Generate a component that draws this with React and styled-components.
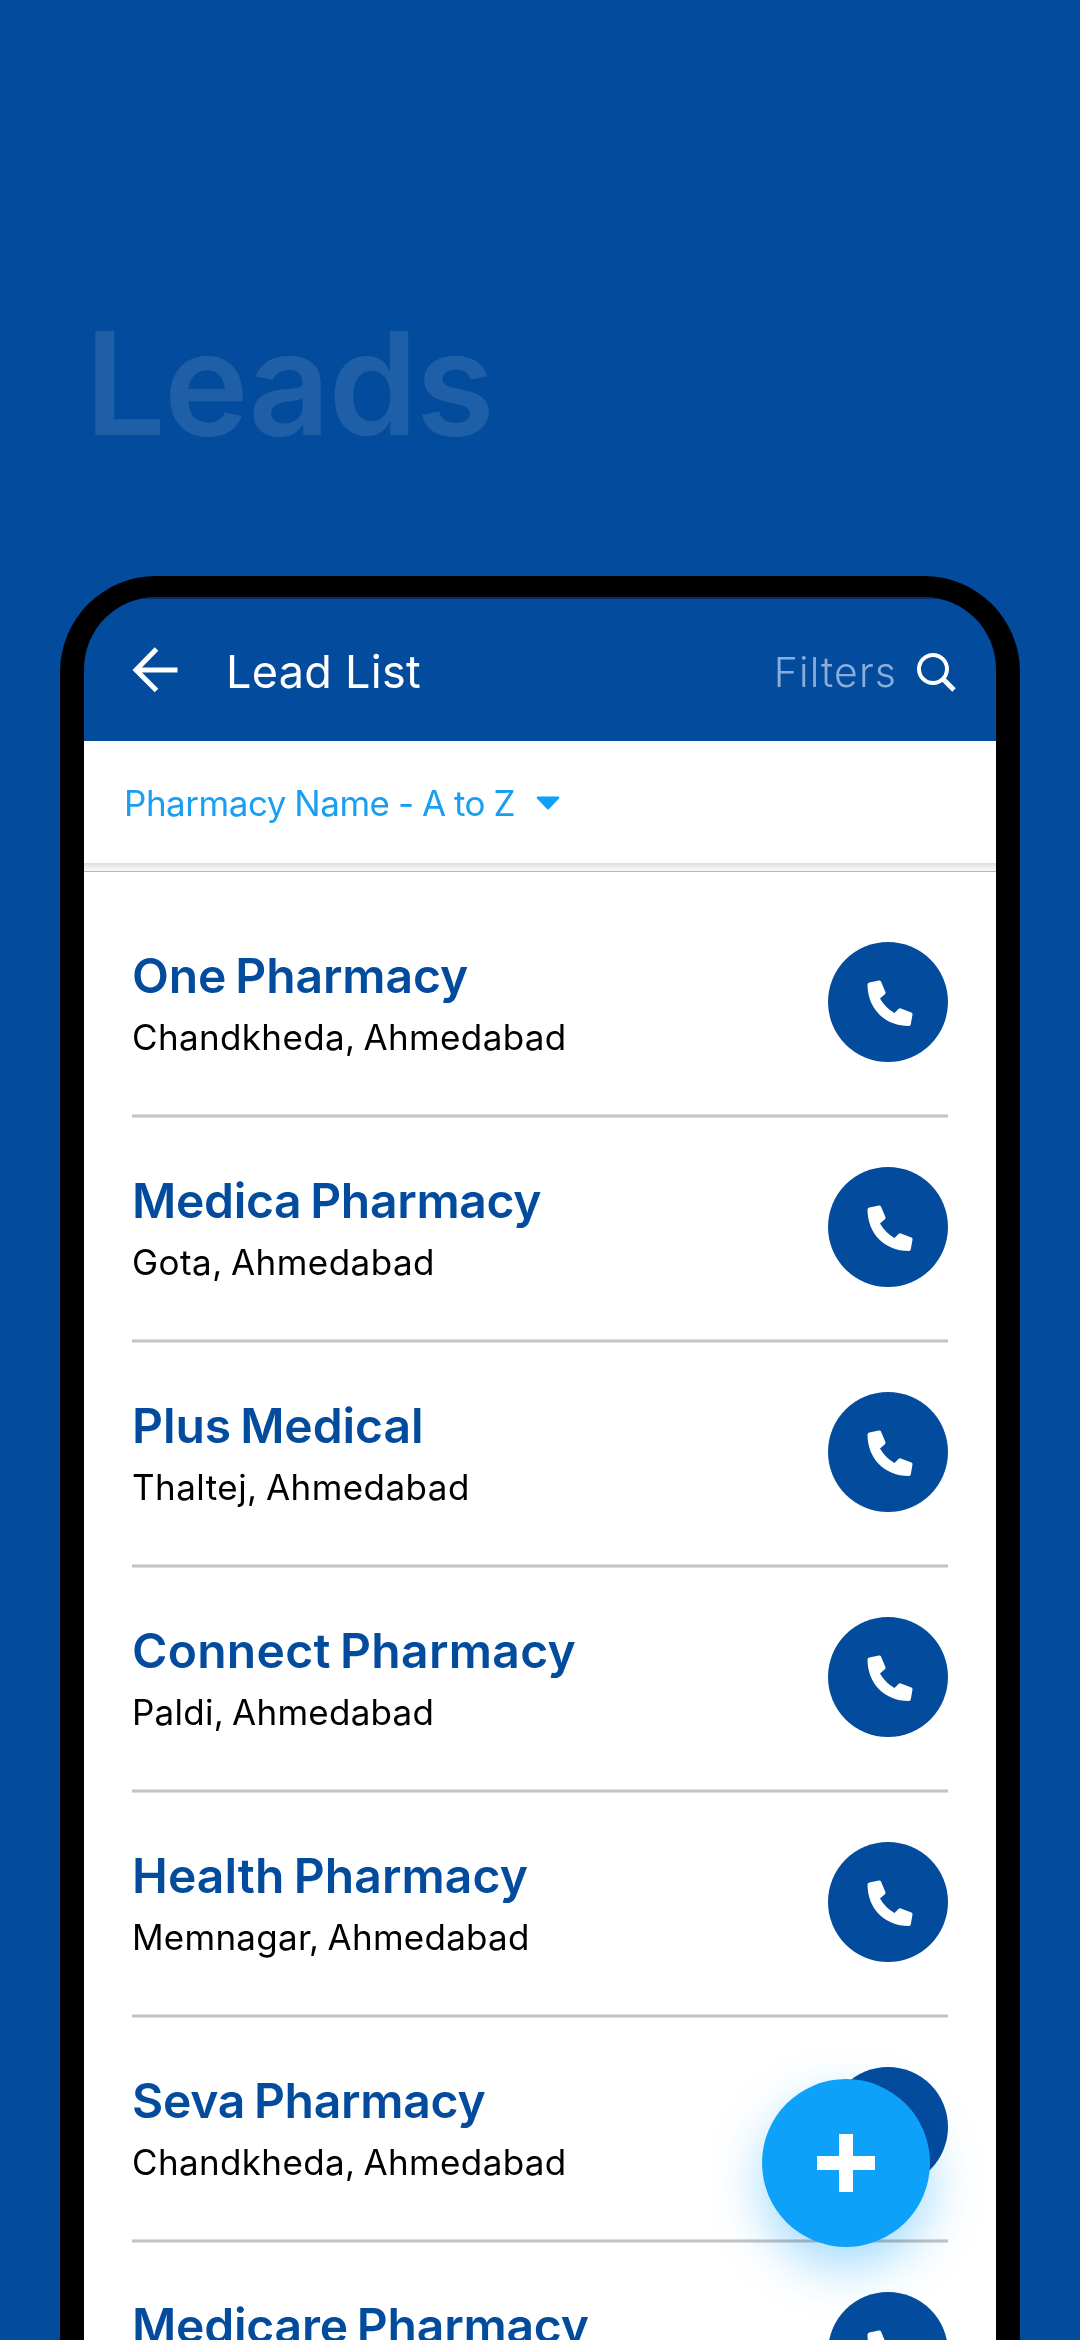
import React from 'react';
import styled, { createGlobalStyle } from 'styled-components';

const colors = {
  brand: '#034c9d',
  accent: '#0ea1f9',
  link: '#189ff2',
  divider: '#c4c4c4',
};

const leads = [
  { name: 'One Pharmacy', area: 'Chandkheda, Ahmedabad', tracking: -0.1, areaTracking: 0.35 },
  { name: 'Medica Pharmacy', area: 'Gota, Ahmedabad', tracking: -0.3, areaTracking: 0.45 },
  { name: 'Plus Medical', area: 'Thaltej, Ahmedabad', tracking: -0.05, areaTracking: 0.45 },
  { name: 'Connect Pharmacy', area: 'Paldi, Ahmedabad', tracking: 0.3, areaTracking: 0.25 },
  { name: 'Health Pharmacy', area: 'Memnagar, Ahmedabad', tracking: 0.1, areaTracking: 0.25 },
  { name: 'Seva Pharmacy', area: 'Chandkheda, Ahmedabad', tracking: -0.25, areaTracking: 0.35 },
  { name: 'Medicare Pharmacy', tracking: -0.2 },
];

const GlobalStyle = createGlobalStyle`
  * {
    box-sizing: border-box;
  }

  body {
    margin: 0;
    background: ${colors.brand};
    font-family: Inter, 'Open Sans', sans-serif;
  }
`;

const Page = styled.main`
  display: flex;
  flex-direction: column;
  width: 1080px;
  height: 2340px;
  overflow: hidden;
  background: ${colors.brand};
`;

const Hero = styled.header`
  flex: none;
  height: 576px;
  padding: 308px 0 0 85px;
`;

const HeroTitle = styled.h1`
  margin: 0;
  font-size: 143px;
  font-weight: 600;
  line-height: 150px;
  letter-spacing: -1.8px;
  color: rgba(255, 255, 255, 0.11);
`;

const Phone = styled.section`
  position: relative;
  display: flex;
  flex: 1;
  min-height: 0;
  margin: 0 60px;
  padding: 21px 24px 0;
  background: #000;
  border-radius: 96px 96px 0 0;
`;

const Screen = styled.div`
  flex: 1;
  overflow: hidden;
  border-radius: 72px 72px 0 0;
`;

const AppBar = styled.div`
  display: flex;
  align-items: center;
  height: 144px;
  padding: 4px 39px 0 48px;
  background: ${colors.brand};
  border-top: 2px solid #062c67;
  color: #fff;
`;

const BackIcon = styled.svg`
  width: 46px;
  height: 46px;
  margin-top: -4px;
`;

const Title = styled.h2`
  flex: 1;
  margin: 0 0 0 48px;
  font-size: 45px;
  font-weight: 400;
  line-height: 60px;
  letter-spacing: 0.3px;
`;

const FiltersLabel = styled.span`
  font-size: 41px;
  font-weight: 350;
  line-height: 60px;
  letter-spacing: 1.1px;
  color: #8aaedb;
`;

const SearchIcon = styled.svg`
  width: 42px;
  height: 42px;
  margin: 0 0 0 18px;
`;

const SortBar = styled.div`
  display: flex;
  align-items: center;
  height: 122px;
  padding: 2px 39px 0 40px;
  background: #fff;
`;

const SortLabel = styled.span`
  font-size: 35px;
  line-height: 48px;
  letter-spacing: -0.47px;
  word-spacing: -1px;
  color: ${colors.link};
`;

const Caret = styled.svg`
  width: 24px;
  height: 14px;
  margin-left: 21px;
`;

const SortShadow = styled.div`
  height: 9px;
  background: linear-gradient(#dedede, #f6f6f6 80%);
  border-bottom: 1px solid #b5b5b5;
`;

const List = styled.ul`
  margin: 0;
  padding: 21px 48px 0;
  background: #fff;
  list-style: none;
`;

const Row = styled.li`
  display: flex;
  align-items: flex-start;
  justify-content: space-between;
  height: 225px;
  padding-top: 49px;
  border-bottom: 1px solid #dedede;
  box-shadow: inset 0 -2px ${colors.divider}, inset 0 -3px #dedede;
`;

const LeadName = styled.h3`
  margin: 0;
  font-size: 48px;
  font-weight: 600;
  line-height: 67px;
  letter-spacing: ${(props) => props.$tracking}px;
  word-spacing: -3px;
  color: ${colors.brand};
`;

const LeadArea = styled.p`
  margin: 0;
  font-size: 35px;
  line-height: 56px;
  letter-spacing: ${(props) => props.$tracking}px;
  word-spacing: -2px;
  color: #000;
`;

const CallButton = styled.button`
  display: flex;
  flex: none;
  align-items: center;
  justify-content: center;
  width: 120px;
  height: 120px;
  padding: 2px 0 0 3px;
  border: 0;
  border-radius: 50%;
  background: ${colors.brand};

  svg {
    width: 46px;
    height: 46px;
  }
`;

/* The glow multiplies, so it tints white but leaves dark buttons alone */
const FabGlow = styled.div`
  position: absolute;
  top: 1503px;
  right: 90px;
  width: 168px;
  height: 168px;
  border-radius: 50%;
  box-shadow: 0 20px 50px rgba(14, 161, 249, 0.38);
  mix-blend-mode: multiply;
`;

const Fab = styled.button`
  position: absolute;
  top: 1503px;
  right: 90px;
  display: flex;
  align-items: center;
  justify-content: center;
  width: 168px;
  height: 168px;
  padding: 0;
  border: 0;
  border-radius: 50%;
  background: ${colors.accent};

  svg {
    width: 58px;
    height: 58px;
  }
`;

function Lead({ lead }) {
  return (
    <Row>
      <div>
        <LeadName $tracking={lead.tracking}>{lead.name}</LeadName>
        {lead.area && <LeadArea $tracking={lead.areaTracking}>{lead.area}</LeadArea>}
      </div>
      <CallButton aria-label={`Call ${lead.name}`}>
        <svg viewBox="0 0 46 46" fill="#fff">
          <path d="M2.3 2.4 12 .5Q13.400 .2 14 1.500L18.400 12Q18.900 13.300 17.900 14.200L13 18.500Q18.500 28 27.500 33L31.700 28.800Q32.600 27.900 33.900 28.400L44.400 32.600Q45.700 33.200 45.500 34.500L43.800 44.300Q43.600 46 42 46C17 46 .5 28 .5 4.500Q.5 2.800 2.300 2.400Z" />
        </svg>
      </CallButton>
    </Row>
  );
}

/** Showcase page with the lead list shown inside a phone */
export default function App() {
  return (
    <Page>
      <GlobalStyle />

      <Hero>
        <HeroTitle>Leads</HeroTitle>
      </Hero>

      <Phone>
        <Screen>
          <AppBar>
            <BackIcon viewBox="0 0 46 46" fill="none" stroke="#fff" strokeWidth="5">
              <path d="M24.500 2 4 23 24.500 43.500M4 23h41.500" />
            </BackIcon>
            <Title>Lead List</Title>
            <FiltersLabel>Filters</FiltersLabel>
            <SearchIcon viewBox="0 0 42 42" fill="none" stroke="#fff">
              <circle cx="18" cy="18" r="14" strokeWidth="4" />
              <path d="m28.500 28.500 10.500 10.500" strokeWidth="5" />
            </SearchIcon>
          </AppBar>

          <SortBar>
            <SortLabel>Pharmacy Name - A to Z</SortLabel>
            <Caret viewBox="0 0 24 14" fill={colors.accent}>
              <path d="M1.500 .5h21q1.500 .5 .5 2L13 13q-1 1-2 0L1 2.500Q0 1 1.500 .5Z" />
            </Caret>
          </SortBar>
          <SortShadow />

          <List>
            {leads.map((lead) => (
              <Lead key={lead.name} lead={lead} />
            ))}
          </List>
        </Screen>

        <FabGlow />
        <Fab aria-label="Add lead">
          <svg viewBox="0 0 58 58" fill="#fff">
            <path d="M22 0h14v22h22v14H36v22H22V36H0V22h22z" />
          </svg>
        </Fab>
      </Phone>
    </Page>
  );
}
